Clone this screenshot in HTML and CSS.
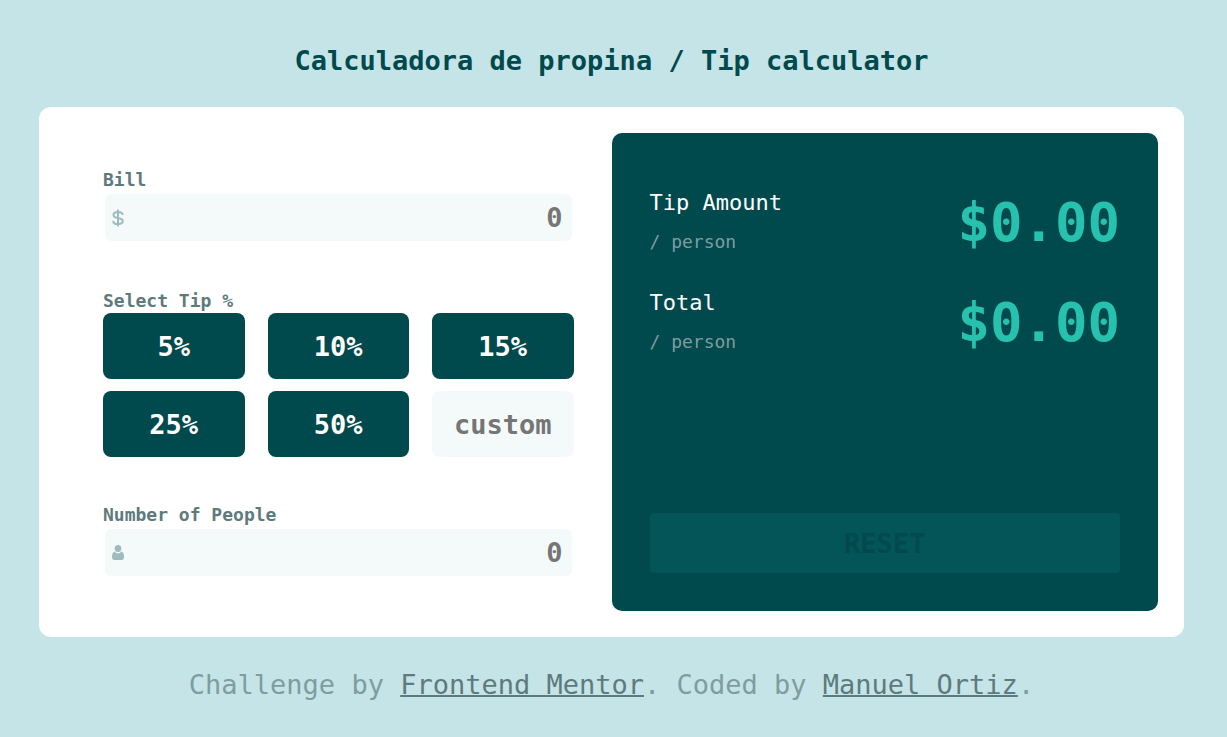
FILE: index.html
```
<!DOCTYPE html>
<html lang="es">
<head>
<meta charset="utf-8">
<meta name="viewport" content="width=device-width, initial-scale=1">
<title>Calculadora de propina / Tip calculator</title>
<link rel="stylesheet" href="styles.css">
</head>
<body>
<h1 class="title">Calculadora de propina / Tip calculator</h1>
<main class="card">
  <form class="form" id="calculator">
    <div class="group">
      <label class="label" for="bill">Bill</label>
      <div class="field">
        <svg class="icon" viewBox="0 0 13 18" aria-hidden="true"><path d="M6 .5v17M10.600 6C10.600 3.900 8.900 2.900 6 2.900S1.500 4 1.500 5.900C1.500 8 3.200 8.500 6 9S10.800 10.200 10.800 12.100C10.800 14.100 9 15.200 6 15.200S1.200 14 1.200 11.700" fill="none" stroke="#9ebbbd" stroke-width="2"/></svg>
        <input class="input" id="bill" type="text" inputmode="decimal" placeholder="0">
      </div>
    </div>
    <div class="group" role="group" aria-labelledby="tip-label">
      <span class="label" id="tip-label">Select Tip %</span>
      <div class="tips">
        <button class="tip" type="button">5%</button>
        <button class="tip" type="button">10%</button>
        <button class="tip" type="button">15%</button>
        <button class="tip" type="button">25%</button>
        <button class="tip" type="button">50%</button>
        <input class="custom" type="text" inputmode="numeric" placeholder="custom" aria-label="Custom tip">
      </div>
    </div>
    <div class="group">
      <label class="label" for="people">Number of People</label>
      <div class="field">
        <svg class="icon" viewBox="0 0 13 18" aria-hidden="true"><g fill="#9ebbbd"><ellipse cx="6" cy="4.500" rx="3.300" ry="3.600"/><path d="M2.600 7.600C3.500 8.900 4.700 9.500 6 9.500S8.500 8.900 9.400 7.600C11.400 8.200 12 10.400 12 13C12 15 11.200 16 9.600 16H2.400C.8 16 0 15 0 13C0 10.400 .6 8.200 2.600 7.600Z"/></g></svg>
        <input class="input" id="people" type="text" inputmode="numeric" placeholder="0">
      </div>
    </div>
  </form>
  <section class="results">
    <div class="result">
      <div>
        <h2 class="name">Tip Amount</h2>
        <p class="unit">/ person</p>
      </div>
      <output class="amount">$0.00</output>
    </div>
    <div class="result">
      <div>
        <h2 class="name">Total</h2>
        <p class="unit">/ person</p>
      </div>
      <output class="amount">$0.00</output>
    </div>
    <button class="reset" type="reset" form="calculator">RESET</button>
  </section>
</main>
<footer class="footer">Challenge by <a class="link" href="#">Frontend Mentor</a>. Coded by <a class="link" href="#">Manuel Ortiz</a>.</footer>
</body>
</html>
```
FILE: styles.css
```
* { box-sizing: border-box; margin: 0; }

body {
  padding: 45px 43px 0 39px;
  background: #c5e4e7;
  color: #00494d;
  font-family: "DejaVu Sans Mono", monospace;
  font-size: 27px;
  line-height: 32px;
}

button, input { font: inherit; font-weight: 700; border: 0; }

.title { font-size: 27px; text-align: center; }

.card {
  display: grid;
  grid-template-columns: 1fr 1fr;
  margin: 30px 0 32px;
  padding: 26px;
  border-radius: 12px;
  background: #fff;
}

.form {
  display: flex;
  flex-direction: column;
  gap: 46px;
  padding: 35px 38px 33px;
}

.group { display: flex; flex-direction: column; }

.label {
  color: #5e7a7d;
  font-size: 18px;
  font-weight: 700;
  line-height: 24px;
}

.field {
  display: flex;
  align-items: center;
  margin: 2px;
  padding-left: 7px;
  border-radius: 6px;
  background: #f4fafa;
}

.icon { flex: none; width: 13px; height: 18px; }

.input {
  flex: 1;
  min-width: 0;
  height: 47px;
  padding: 0 9px;
  border-radius: 6px;
  background: transparent;
  color: #00494d;
  text-align: right;
}

.tips {
  display: grid;
  grid-template-columns: repeat(3, 1fr);
  gap: 12px 23px;
}

.tip, .custom {
  min-width: 0;
  height: 66px;
  padding: 0;
  border-radius: 8px;
  text-align: center;
}

.tip { padding-top: 2px; background: #00494d; color: #fff; }
.custom { background: #f4fafa; color: #00494d; }

.input::placeholder, .custom::placeholder { color: #757575; opacity: 1; }

.results {
  display: flex;
  flex-direction: column;
  gap: 24px;
  padding: 52px 38px 38px;
  border-radius: 10px;
  background: #00494d;
}

.result {
  display: flex;
  align-items: flex-start;
  justify-content: space-between;
  height: 76px;
}

.name { color: #fff; font-size: 22px; font-weight: 400; line-height: 36px; }
.unit { color: #7f9c9f; font-size: 18px; line-height: 42px; }
.amount { color: #26c2ae; font-size: 54px; font-weight: 700; line-height: 76px; }

.reset {
  height: 60px;
  margin-top: auto;
  padding-top: 2px;
  border-radius: 4px;
  background: #045557;
  color: #00494d;
}

.footer { color: #7f9c9f; text-align: center; }
.link { color: #5e7a7d; text-decoration-thickness: 2px; }
```
